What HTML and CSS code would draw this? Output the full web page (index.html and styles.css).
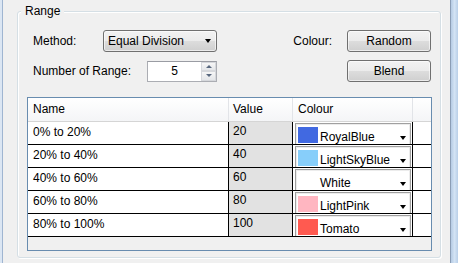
FILE: index.html
```html
<!DOCTYPE html>
<html lang="en">
<head>
    <meta charset="UTF-8">
    <meta name="viewport" content="width=device-width, initial-scale=1.0">
    <title>Range</title>
    <link rel="stylesheet" href="styles.css">
</head>
<body>
    <div class="window">
        <div class="frame-left"></div>
        <div class="client">
            <fieldset class="group">
                <legend>Range</legend>

                <div class="controls">
                    <div class="field">
                        <span>Method:</span>
                        <div class="btn combo">Equal Division<span class="arrow"></span></div>
                    </div>
                    <span class="label-right">Colour:</span>
                    <div class="btn">Random</div>

                    <div class="field">
                        <span>Number of Range:</span>
                        <div class="spin">
                            <span class="spin-value">5</span>
                            <div class="spin-buttons">
                                <span class="spin-up"><i></i></span>
                                <span class="spin-down"><i></i></span>
                            </div>
                        </div>
                    </div>
                    <span></span>
                    <div class="btn">Blend</div>
                </div>

                <div class="grid">
                    <div class="grid-head">
                        <div>Name</div>
                        <div class="col-value">Value</div>
                        <div>Colour</div>
                        <div></div>
                    </div>
                    <div class="grid-row">
                        <div>0% to 20%</div>
                        <div class="cell-value">20</div>
                        <div class="cell-colour">
                            <div class="colour-combo"><span class="swatch" style="background:#4169e1"></span><span>RoyalBlue</span><span class="arrow"></span></div>
                        </div>
                        <div></div>
                    </div>
                    <div class="grid-row">
                        <div>20% to 40%</div>
                        <div class="cell-value">40</div>
                        <div class="cell-colour">
                            <div class="colour-combo"><span class="swatch" style="background:#87cefa"></span><span>LightSkyBlue</span><span class="arrow"></span></div>
                        </div>
                        <div></div>
                    </div>
                    <div class="grid-row">
                        <div>40% to 60%</div>
                        <div class="cell-value">60</div>
                        <div class="cell-colour">
                            <div class="colour-combo"><span class="swatch" style="background:#ffffff"></span><span>White</span><span class="arrow"></span></div>
                        </div>
                        <div></div>
                    </div>
                    <div class="grid-row">
                        <div>60% to 80%</div>
                        <div class="cell-value">80</div>
                        <div class="cell-colour">
                            <div class="colour-combo"><span class="swatch" style="background:#ffb6c1"></span><span>LightPink</span><span class="arrow"></span></div>
                        </div>
                        <div></div>
                    </div>
                    <div class="grid-row">
                        <div>80% to 100%</div>
                        <div class="cell-value">100</div>
                        <div class="cell-colour">
                            <div class="colour-combo"><span class="swatch" style="background:#ff5a50"></span><span>Tomato</span><span class="arrow"></span></div>
                        </div>
                        <div></div>
                    </div>
                </div>
            </fieldset>
        </div>
        <div class="frame-right"></div>
    </div>
</body>
</html>
```

FILE: styles.css
```css
* {
    box-sizing: border-box;
}
body {
    margin: 0;
    background: #f0f0f0;
    color: #000;
    font-family: "Liberation Sans", Arial, sans-serif;
    font-size: 12px;
}
.window {
    display: flex;
    height: 263px;
}
.frame-left {
    width: 3px;
    background: #dbe6f3;
    border-right: 1px solid #9fb5d1;
}
.frame-right {
    width: 8px;
    border-left: 1px solid #8b9db5;
    background: linear-gradient(to right, #b5cbe4, #d3e3f4 50%, #b9cfe8);
}
.client {
    flex: 1;
    padding: 4px 9px 0 14px;
}
.group {
    margin: 0;
    min-width: 0;
    padding: 0 8px 6px 9px;
    border: 1px solid #d5dfe5;
    border-radius: 3px;
    box-shadow: inset 1px 1px 0 #fff, 1px 1px 0 #fff;
}
.group legend {
    margin-left: -6px;
    padding: 0 4px;
    line-height: 15px;
    background: #f0f0f0;
}

/* top controls */
.controls {
    display: grid;
    grid-template-columns: 184px 1fr 84px;
    grid-auto-rows: 22px;
    row-gap: 8px;
    column-gap: 15px;
    align-items: center;
    margin-top: 11px;
    padding: 0 1px 0 6px;
}
.field {
    display: flex;
    justify-content: space-between;
    align-items: center;
}
.label-right {
    justify-self: end;
}
.btn {
    height: 22px;
    line-height: 20px;
    text-align: center;
    border: 1px solid #707070;
    border-radius: 3px;
    background: linear-gradient(#f2f2f2, #ebebeb 50%, #dddddd 50%, #cfcfcf);
    box-shadow: inset 0 0 0 1px rgba(255,255,255,0.6);
}
.combo {
    width: 114px;
    display: flex;
    align-items: center;
    padding-left: 4px;
    text-align: left;
}
.arrow {
    width: 0;
    height: 0;
    border-left: 3.5px solid transparent;
    border-right: 3.5px solid transparent;
    border-top: 4px solid #000;
}
.combo .arrow {
    margin-left: auto;
    margin-right: 5px;
}
.spin {
    width: 70px;
    height: 21px;
    display: flex;
    border: 1px solid #abadb3;
    border-top-color: #9a9ca3;
    background: #fff;
}
.spin-value {
    flex: 1;
    line-height: 19px;
    text-align: center;
}
.spin-buttons {
    width: 15px;
    display: flex;
    flex-direction: column;
}
.spin-buttons span {
    flex: 1;
    display: flex;
    align-items: center;
    justify-content: center;
    border: 1px solid #d6d8dc;
    background: linear-gradient(#f6f6f6, #e4e6e9);
}
.spin-up i {
    border-left: 3px solid transparent;
    border-right: 3px solid transparent;
    border-bottom: 3px solid #59687f;
}
.spin-down i {
    border-left: 3px solid transparent;
    border-right: 3px solid transparent;
    border-top: 3px solid #59687f;
}

/* data grid */
.grid {
    margin-top: 15px;
    height: 154px;
    border: 1px solid #688caf;
    background: #f0f0f0;
    overflow: hidden;
}
.grid-head,
.grid-row {
    display: grid;
    grid-template-columns: 201px 64px 120px 1fr;
}
.grid-head {
    height: 24px;
    border-bottom: 1px solid #d5d5d5;
    background: linear-gradient(#ffffff, #f4f5f7);
}
.grid-head div {
    line-height: 23px;
    padding-left: 5px;
    border-right: 1px solid #e2e4e8;
}
.grid-head div:last-child {
    border-right: none;
}
.grid-head .col-value {
    padding-left: 4px;
}
.grid-row {
    height: 23px;
    border-bottom: 1px solid #000;
    background: #fff;
}
.grid-row > div {
    overflow: hidden;
    padding: 3px 0 0 5px;
    line-height: 15px;
    border-right: 1px solid #000;
}
.grid-row > div:last-child {
    border-right: none;
}
.grid-row .cell-value {
    padding: 2px 0 0 4px;
    background: #e2e2e2;
}
.grid-row .cell-colour {
    padding: 0;
}
.colour-combo {
    display: flex;
    align-items: flex-start;
    width: 116px;
    height: 30px;
    margin: 1px 0 0 2px;
    border: 1px solid #a0a0a0;
    box-shadow: inset 0 0 0 1px #ececec;
}
.swatch {
    width: 20px;
    height: 16px;
    margin: 3px 2px 0 2px;
}
.colour-combo span:nth-child(2) {
    margin-top: 6px;
}
.colour-combo .arrow {
    margin: 12px 4px 0 auto;
}
```
